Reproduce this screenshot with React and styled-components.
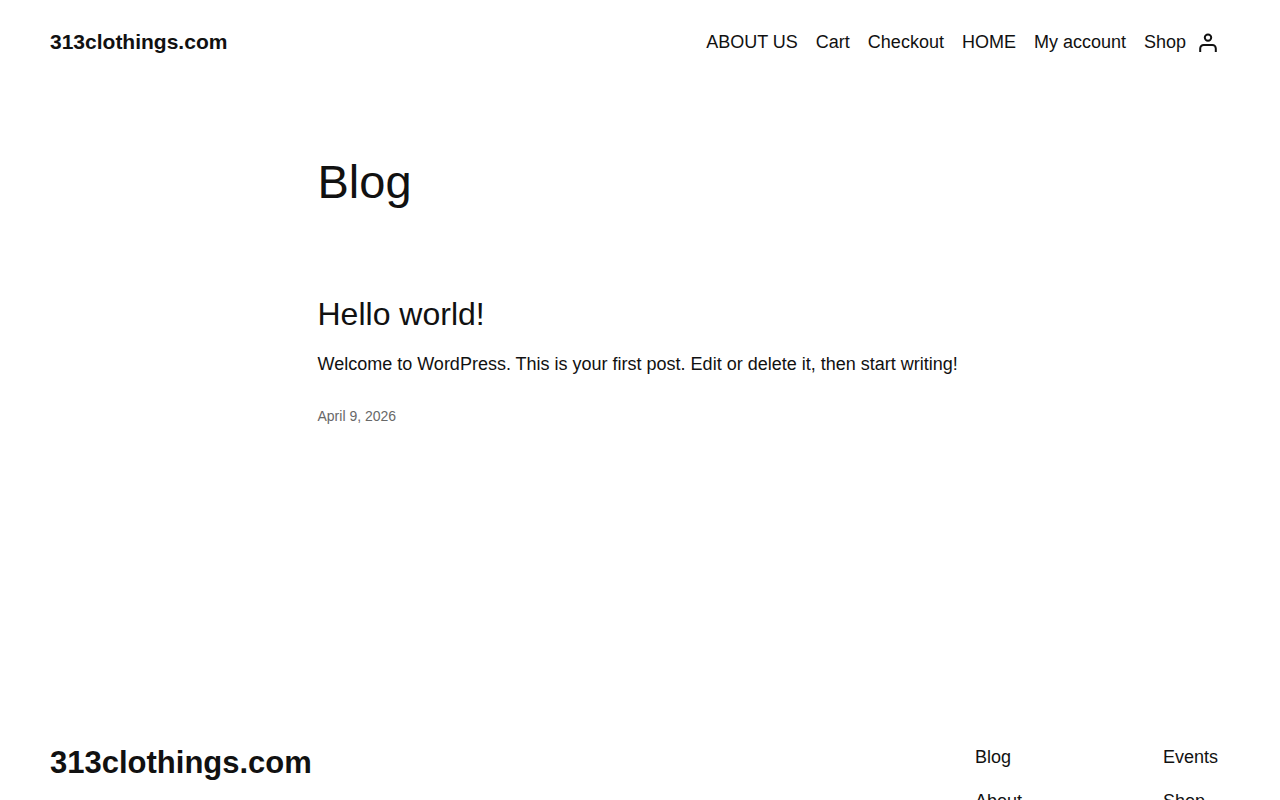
import styled, { createGlobalStyle } from "styled-components";

const pages = ["ABOUT US", "Cart", "Checkout", "HOME", "My account", "Shop"];
const footerMenus = [
    ["Blog", "About", "FAQs", "Authors"],
    ["Events", "Shop", "Patterns", "Themes"],
];

export default function App() {
    return (
        <>
            <GlobalStyle />
            <Header>
                <SiteTitle href="#">313clothings.com</SiteTitle>
                <HeaderRight>
                    <Nav aria-label="Pages">
                        {pages.map((page) => (
                            <NavLink key={page} href="#">{page}</NavLink>
                        ))}
                    </Nav>
                    <AccountLink href="#" aria-label="Login">
                        <AccountIcon />
                    </AccountLink>
                </HeaderRight>
            </Header>
            <Main>
                <PageTitle>Blog</PageTitle>
                <Post>
                    <PostTitle><a href="#">Hello world!</a></PostTitle>
                    <PostText>Welcome to WordPress. This is your first post. Edit or delete it, then start writing!</PostText>
                    <PostDate href="#">April 9, 2026</PostDate>
                </Post>
            </Main>
            <Footer>
                <FooterTitle><a href="#">313clothings.com</a></FooterTitle>
                <FooterMenus>
                    {footerMenus.map((menu) => (
                        <FooterMenu key={menu[0]}>
                            {menu.map((item) => (
                                <NavLink key={item} href="#">{item}</NavLink>
                            ))}
                        </FooterMenu>
                    ))}
                </FooterMenus>
            </Footer>
        </>
    );
}

function AccountIcon() {
    return (
        <svg width="18" height="20" viewBox="0 0 18 20" fill="none" stroke="currentColor" strokeWidth="2" aria-hidden="true">
            <circle cx="9" cy="5.6" r="3.2" />
            <path d="M1.2 20v-3.6a3.4 3.4 0 0 1 3.4-3.4h8.8a3.4 3.4 0 0 1 3.4 3.4v3.6" />
        </svg>
    );
}

const GlobalStyle = createGlobalStyle`
    * {
        box-sizing: border-box;
    }

    html {
        scrollbar-width: none;
    }

    body {
        margin: 0;
        background-color: #ffffff;
        color: #111111;
        font-family: "Liberation Sans", Arial, sans-serif;
        font-size: 18px;
        line-height: 25px;
    }

    a {
        color: inherit;
        text-decoration: none;
    }

    a:hover {
        text-decoration: underline;
    }
`;

const Header = styled.header`
    display: flex;
    justify-content: space-between;
    align-items: center;
    padding: 19px 50px;
`;

const SiteTitle = styled.a`
    font-size: 21px;
    font-weight: 700;
    line-height: 30px;
`;

const HeaderRight = styled.div`
    display: flex;
    align-items: center;
`;

const Nav = styled.nav`
    display: flex;
    gap: 18px;
`;

const NavLink = styled.a`
    line-height: 25px;
`;

const AccountLink = styled.a`
    display: flex;
    padding: 13px;
`;

const Main = styled.main`
    width: 100%;
    max-width: 645px;
    min-height: 621px;
    margin: 0 auto;
    padding-top: 71px;
`;

const PageTitle = styled.h1`
    margin: 0;
    font-size: 47px;
    font-weight: 400;
    line-height: 54px;
`;

const Post = styled.article`
    padding-top: 87px;
`;

const PostTitle = styled.h2`
    margin: 0;
    font-size: 32px;
    font-weight: 400;
    line-height: 36px;
`;

const PostText = styled.p`
    margin: 20px 0 29px;
`;

const PostDate = styled.a`
    display: block;
    color: #686868;
    font-size: 14px;
    line-height: 20px;
`;

const Footer = styled.footer`
    display: flex;
    justify-content: space-between;
    align-items: flex-start;
    padding: 40px 50px 60px;
`;

const FooterTitle = styled.h2`
    margin: 0;
    font-size: 31px;
    line-height: 36px;
`;

const FooterMenus = styled.div`
    display: flex;
    gap: 126px;
`;

const FooterMenu = styled.nav`
    display: flex;
    flex-direction: column;
    gap: 19px;
`;
